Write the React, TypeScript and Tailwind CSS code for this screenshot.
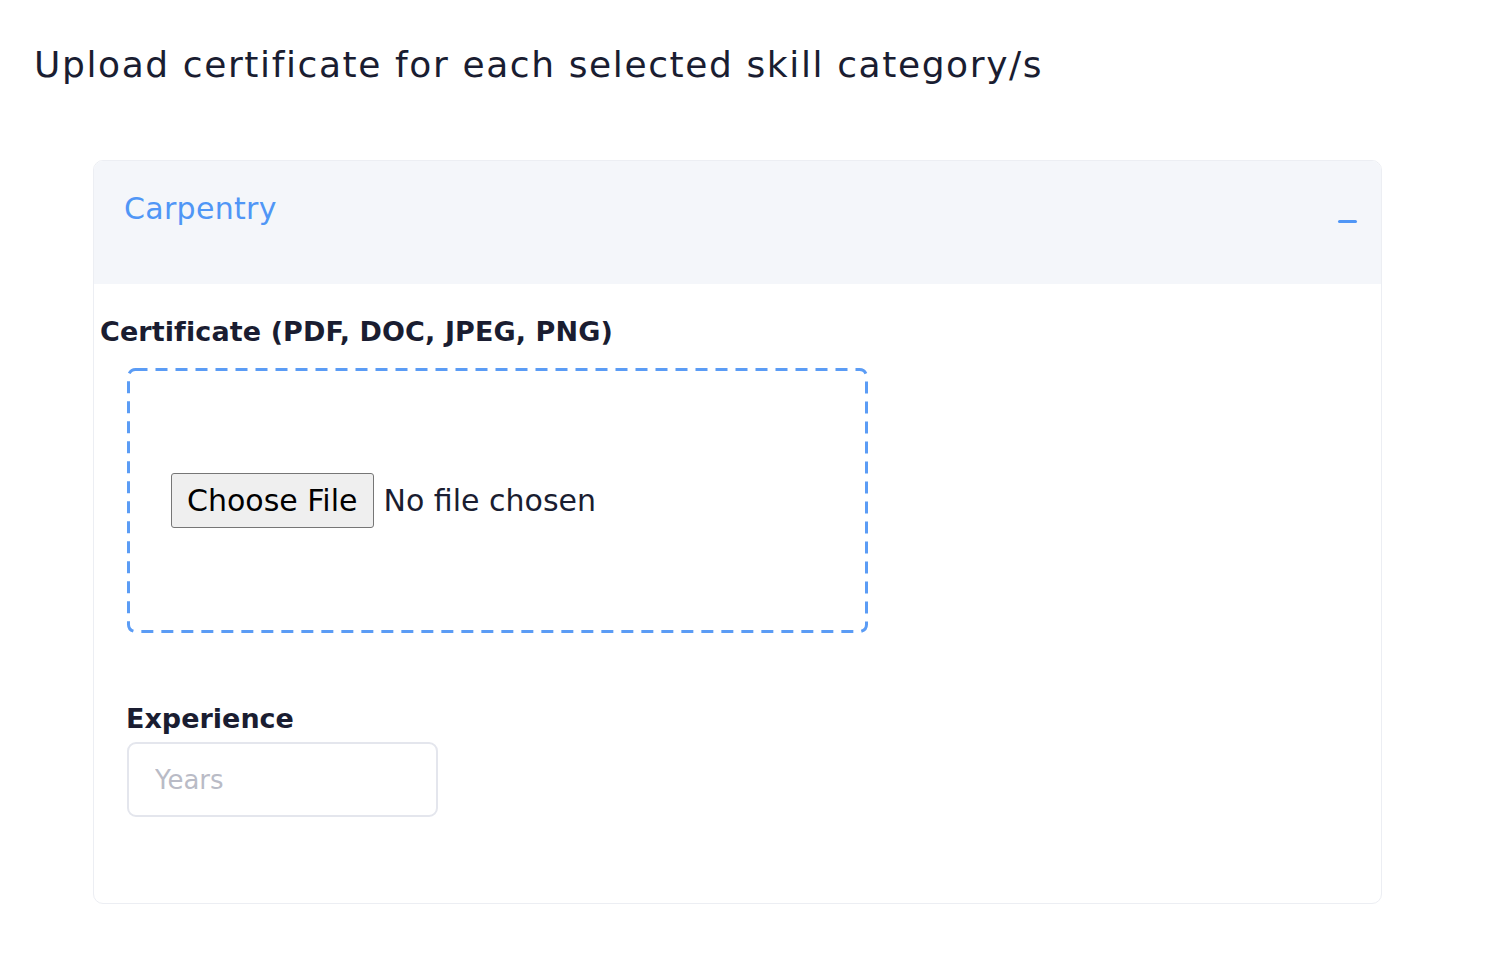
import React from 'react';

const font = { fontFamily: '"DejaVu Sans", "Liberation Sans", sans-serif' };

export default function App() {
  return (
    <div className="min-h-screen bg-white text-[#1a1d31]" style={font}>
      <div className="pt-[38px] pl-[34px]">
        <h1 className="text-[36px] leading-[54px] font-normal tracking-[1.6px]">
          Upload certificate for each selected skill category/s
        </h1>
      </div>

      {/* Accordion card */}
      <div className="mt-[68px] ml-[93px] w-[1289px] h-[744px] rounded-[10px] border border-[#eceef3] overflow-hidden">
        <div className="h-[123px] bg-[#f4f6fa] flex justify-between pl-[30px] pr-[24px]">
          <span className="mt-[28px] text-[30px] leading-[40px] tracking-[0.3px] text-[#5096f6]">Carpentry</span>
          <span className="mt-[59px] w-[19px] h-[3px] rounded-full bg-[#5096f6]" />
        </div>

        <div className="pl-[6px] pt-[28px]">
          <label className="block text-[27px] leading-[40px] font-bold tracking-[0.1px]">
            Certificate (PDF, DOC, JPEG, PNG)
          </label>
          <div className="relative mt-[16px] ml-[27px] w-[741px] h-[265px] flex items-center pl-[44px]">
            <svg className="absolute inset-0 pointer-events-none" width="741" height="265">
              <rect x="1.5" y="1.5" width="738" height="262" rx="7" fill="none" stroke="#5b9cf5" strokeWidth="3" strokeDasharray="12 8" />
            </svg>
            <input
              type="file"
              className="text-[30px] text-[#1a1d31] file:mr-[10px] file:h-[55px] file:px-[15px] file:text-[30px] file:text-black file:bg-[#efefef] file:border file:border-solid file:border-[#767676] file:rounded-[3px]"
            />
          </div>

          <div className="mt-[66px] ml-[27px]">
            <label className="block -ml-[1px] text-[27px] leading-[40px] font-bold">Experience</label>
            <input
              type="text"
              placeholder="Years"
              className="mt-[3px] w-[311px] h-[75px] rounded-[9px] border-2 border-[#e4e6ed] px-[26px] text-[26px] outline-none placeholder:text-[#b9bbc6]"
            />
          </div>
        </div>
      </div>
    </div>
  );
}
